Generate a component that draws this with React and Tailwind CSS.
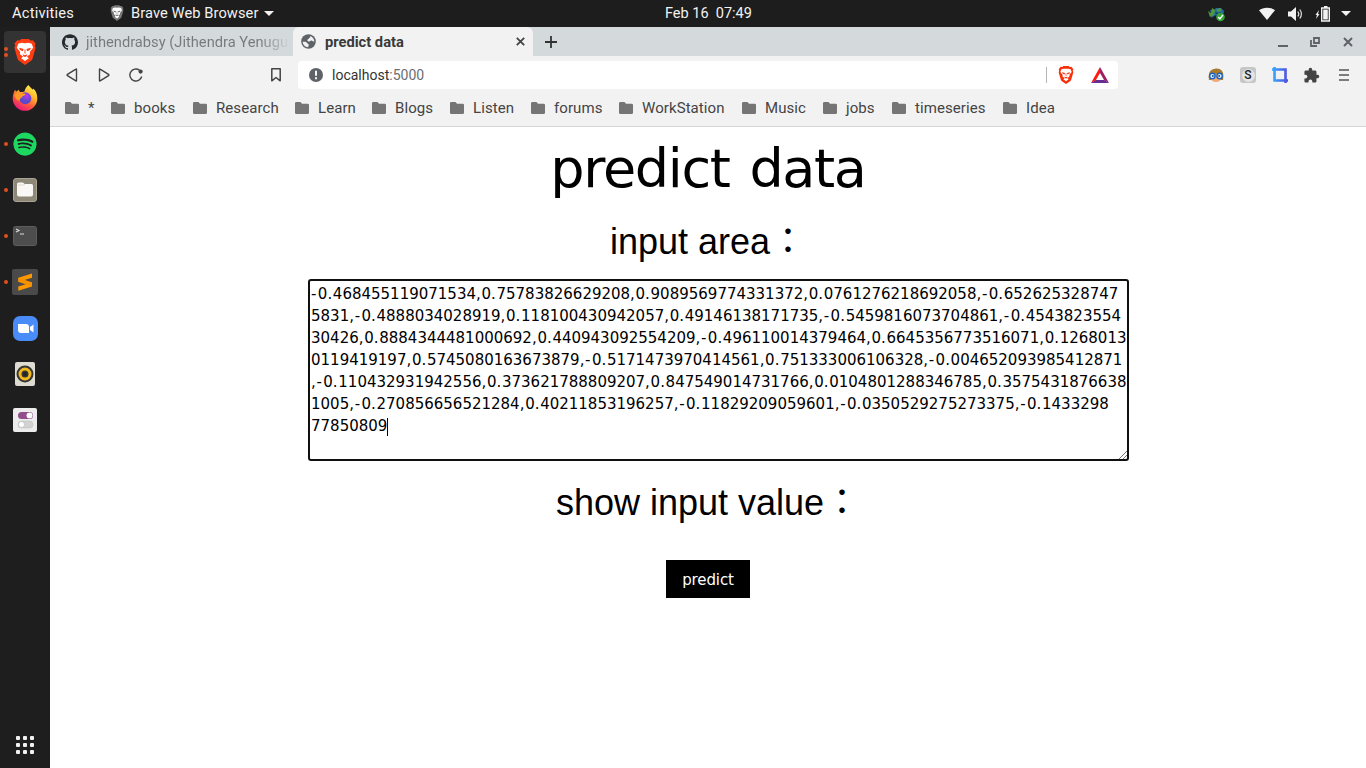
import React from "react";
import { SiGithub } from "react-icons/si";
import { FaSpotify } from "react-icons/fa";
import { MdExtension } from "react-icons/md";

const bookmarks = ["*", "books", "Research", "Learn", "Blogs", "Listen", "forums", "WorkStation", "Music", "jobs", "timeseries", "Idea"];

const lines = [
  "-0.468455119071534,0.75783826629208,0.9089569774331372,0.0761276218692058,-0.652625328747",
  "5831,-0.4888034028919,0.118100430942057,0.49146138171735,-0.5459816073704861,-0.4543823554",
  "30426,0.8884344481000692,0.440943092554209,-0.496110014379464,0.6645356773516071,0.1268013",
  "0119419197,0.5745080163673879,-0.5171473970414561,0.751333006106328,-0.004652093985412871",
  ",-0.110432931942556,0.373621788809207,0.847549014731766,0.0104801288346785,0.3575431876638",
  "1005,-0.270856656521284,0.40211853196257,-0.11829209059601,-0.0350529275273375,-0.1433298",
  "77850809",
];

// Punctuation is set a little wider than the digits' own spacing.
function NumberLine({ text }) {
  return text.split(/([,.]|-)/).map((part, i) => {
    if (part === "-") return <span key={i} className="tracking-[1.400px]">-</span>;
    if (part === "," || part === ".") return <span key={i} className="tracking-[0.690px]">{part}</span>;
    return part;
  });
}

function Lion({ className, shield, face }) {
  return (
    <svg viewBox="0 0 24 27" className={className}>
      <path d="M6.5 1.5 8 0h8l1.5 1.5L20 1.3l3 3.5-.8 2 .8 2.4-3.2 11.3q-.4 1.4-1.6 2.2L12 27l-6.2-4.3q-1.2-.8-1.6-2.2L1 9.2l.8-2.4-.8-2 3-3.5z" fill={shield} />
      <path d="M12 4.3 8.6 4 5 5 3.5 9l3.3 4.2v2.6l3.2 2.5-2 1.7 4 2.8 4-2.8-2-1.7 3.2-2.500v-2.600L20.500 9 19 5l-3.600-1z" fill={face} />
      <path d="m5.8 9.2 4.700 1.200-.7 2.200-3-1.200zM18.200 9.200l-4.700 1.200.7 2.200 3-1.200zM12 17l-2.500-1.200.8 2.200 1.700.8 1.700-.8.8-2.200zM11.500 11h1v4h-1z" fill={shield} />
    </svg>
  );
}

function Firefox() {
  return (
    <svg viewBox="0 0 26 26" className="size-[26px]">
      <defs>
        <linearGradient id="ff" x1=".85" y1=".05" x2=".3" y2="1">
          <stop offset="0" stopColor="#fff44f" /><stop offset=".35" stopColor="#ffb52b" /><stop offset=".65" stopColor="#ff5a3c" /><stop offset="1" stopColor="#e8157f" />
        </linearGradient>
        <radialGradient id="fp" cx=".6" cy=".3"><stop offset="0" stopColor="#b13cec" /><stop offset="1" stopColor="#5a48c8" /></radialGradient>
      </defs>
      <path d="M16.500 0c1 2 3 3.200 4.500 4.800l.3-1.200C24 6 25.300 9.500 25.300 13.500a12.300 12.300 0 0 1-24.600 0C.7 10 2 6.500 3.200 4.800l.8 2C5 5.700 6 5.500 6.500 4.700l1.500 2.200c2 0 3 0 4.500-.5C13 3.500 14.500 1.500 16.500 0z" fill="url(#ff)" />
      <circle cx="13.300" cy="13.300" r="6" fill="url(#fp)" />
      <path d="M2.300 10c2.200-2.500 5-2.800 7.200-2 1.500.7 3.500.2 4 1-.2 1.800-3 1.500-3.500 3.200-.8.700-2.500 1.300-2.200 3.300-3 .5-5-3-5.500-5.500z" fill="#ff9a24" />
    </svg>
  );
}

function DockItem({ dots = 0, active = false, children }) {
  return (
    <div className="flex h-[46px] items-center pl-1">
      <div className={active ? "relative flex h-[42px] w-[42px] items-center justify-center rounded bg-[#333]" : "relative flex h-[42px] w-[42px] items-center justify-center"}>
        {dots > 0 && (
          <div className="absolute left-0 flex flex-col gap-[2px]">
            {Array.from({ length: dots }, (_, i) => <span key={i} className="size-1 rounded-full bg-[#e2501e]" />)}
          </div>
        )}
        {children}
      </div>
    </div>
  );
}

function TopBar() {
  return (
    <header className="flex h-[27px] shrink-0 items-center bg-[#1d1d1d] text-[14.667px] text-[#f2f2f2]">
      <div className="flex w-[665px] items-center pb-px pl-3">
        <span className="w-[98px] tracking-[0.200px]">Activities</span>
        <Lion className="h-4 w-[14px]" shield="#777" face="#fff" />
        <span className="ml-[7px] w-[129px] whitespace-nowrap tracking-[0.080px]">Brave Web Browser</span>
        <svg viewBox="0 0 10 5" className="ml-1 h-[5px] w-[10px]"><path d="M0 0h10L5 5z" fill="#f2f2f2" /></svg>
      </div>
      <span className="w-[542px] whitespace-pre text-[14.500px]">Feb 16  07:49</span>
      <svg viewBox="0 0 18 16" className="ml-[1px] h-4 w-[18px]">
        <path d="m2 4 4 0 2-2 5 0 3 3-1 5-4 1-3-2-5 3 1-3z" fill="#246baa" />
        <path d="M0 5l3 2 1-5 3 2-1 5-4 2zM8 4l4-2 2 2-3 2z" fill="#4f9a37" />
        <path d="m7 6 3 1 3-1-2 3-3-1z" fill="#173a59" />
        <circle cx="12.500" cy="11" r="4.300" fill="#33a532" />
        <path d="m10.200 11 1.700 2 3-4" stroke="#fff" strokeWidth="1.400" fill="none" />
      </svg>
      <svg viewBox="0 0 16 13" className="ml-[33px] h-[13px] w-4"><path d="M0 3.300C4-.2 12-.2 16 3.300L8 13z" fill="#f2f2f2" /></svg>
      <svg viewBox="0 0 16 14" className="ml-[13px] h-[14px] w-4"><path d="M0 4.500h3L8 0v14L3 9.500H0z" fill="#f2f2f2" /><path d="M9.800 4.500q2 2.500 0 5M11.800 2.500q3.200 4.500 0 9" stroke="#ddd" strokeWidth="1.200" fill="none" /></svg>
      <svg viewBox="0 0 16 16" className="ml-[11px] h-4 w-4"><path d="M4 4 .5 9H2l-1 4 3.500-5H3z" fill="#f2f2f2" /><path d="M6.700 2h7.600v13H6.700zM9 .7h3.500" fill="none" stroke="#f2f2f2" strokeWidth="1.400" /><path d="M8.200 3.500h4.600v10H8.200z" fill="#f2f2f2" /></svg>
      <svg viewBox="0 0 10 5" className="ml-[10px] h-[5px] w-[10px]"><path d="M0 0h10L5 5z" fill="#f2f2f2" /></svg>
    </header>
  );
}

function Dock() {
  return (
    <aside className="flex w-[50px] shrink-0 flex-col bg-[#1e1e1e] pt-[2px]">
      <DockItem dots={2} active><Lion className="h-[26px] w-6" shield="#ff3d12" face="#fff" /></DockItem>
      <DockItem><Firefox /></DockItem>
      <DockItem dots={1}><FaSpotify className="size-6 rounded-full text-[#1ed760]" /></DockItem>
      <DockItem dots={1}>
        <svg viewBox="0 0 24 24" className="size-6"><rect x=".5" y=".5" width="23" height="23" rx="2.500" fill="#8d8877" stroke="#aaa593" /><path d="M4 6q0-1.500 1.500-1.500H10L11.500 6h7Q20 6 20 7.500v9q0 2-2 2H6q-2 0-2-2z" fill="#faf8f5" /><path d="M4.500 7h6L12 6" stroke="#ddd7c9" fill="none" /></svg>
      </DockItem>
      <DockItem dots={1}>
        <svg viewBox="0 0 24 20" className="h-5 w-6"><rect x=".5" y=".5" width="23" height="19" rx="2" fill="#4d4d4d" stroke="#5c5c5c" /><path d="m3 3 3 1.500L3 6M7 8h4" stroke="#ddd" strokeWidth="1.100" fill="none" /></svg>
      </DockItem>
      <DockItem dots={1}>
        <svg viewBox="0 0 26 26" className="size-[26px]"><rect width="26" height="26" rx="2" fill="#4a4a4a" /><path d="M20 4.500v4.200l-7.500 2.300 7.500 2.500v4L6.300 21.700v-4.200l7.500-2.300-7.500-2.500V8.700z" fill="#ff9800" /><path d="m6.300 12.500 0-3.500 13.700 4.500v3.500z" fill="#f59000" /></svg>
      </DockItem>
      <DockItem>
        <svg viewBox="0 0 25 25" className="size-[25px]"><rect width="25" height="25" rx="7" fill="#4a8cf7" /><path d="M5 8h8q3 0 3 3v6H8q-3 0-3-3zM17 11l3.500-2.500v8L17 14z" fill="#fff" /></svg>
      </DockItem>
      <DockItem>
        <svg viewBox="0 0 20 24" className="h-6 w-5"><rect width="20" height="24" rx="2" fill="#dedbd2" /><circle cx="10" cy="12" r="8.500" fill="#353535" /><circle cx="10" cy="12" r="5" fill="none" stroke="#f2b91d" strokeWidth="3" /><circle cx="10" cy="12" r="2" fill="#252525" /></svg>
      </DockItem>
      <DockItem>
        <svg viewBox="0 0 24 24" className="size-6"><rect width="24" height="24" rx="2" fill="#ececec" /><rect x="5" y="4" width="15" height="7" rx="3.500" fill="#924d8b" /><circle cx="16.500" cy="7.500" r="3" fill="#fff" /><rect x="5" y="13" width="15" height="7" rx="3.500" fill="#d2d2d2" stroke="#bbb" strokeWidth=".5" /><circle cx="8.500" cy="16.500" r="3" fill="#fff" stroke="#aaa" strokeWidth=".5" /></svg>
      </DockItem>
      <div className="mt-auto flex h-[46px] items-center justify-center">
        <div className="grid grid-cols-3 gap-[3px]">
          {Array.from({ length: 9 }, (_, i) => <span key={i} className="size-[3.700px] rounded-[1px] bg-[#f1f1f1]" />)}
        </div>
      </div>
    </aside>
  );
}

function TabStrip() {
  return (
    <div className="flex h-[29px] shrink-0 bg-[#d4d9dc]">
      <div className="flex w-[243px] items-center pl-3">
        <SiGithub className="size-4 shrink-0 text-[#24292f]" />
        <div className="ml-2 w-[204px] whitespace-nowrap bg-linear-to-r from-[#75797b] from-85% to-[#d4d9dc] bg-clip-text pt-px text-[14.700px] text-transparent">jithendrabsy (Jithendra Yenugu</div>
      </div>
      <div className="flex w-60 items-center rounded-t-md bg-[#f2f2f2] pl-2">
        <svg viewBox="0 0 16 16" className="size-[15px]"><circle cx="8" cy="8" r="7.800" fill="#5f6368" /><path d="M1.800 8.300c2-.3 4.200 0 4.700 1.200.3 1 1.700.8 1.800 2 .1 1-.7 1.200-.6 2.700C4.300 14 1.900 11.500 1.800 8.300zM9.700 2c2.500.7 4.300 2.900 4.500 5.600-.8.800-1.700.4-2.200-.3-.6-.8-1.900-.2-2.500.4-.8.600-2.400.2-2.700-.9-.3-1 1.500-1 1.600-1.900.1-1 1.500-.8 1.500-1.700z" fill="#f2f2f2" /></svg>
        <span className="ml-[9px] w-[191px] pt-px text-[14.700px] font-bold text-[#3a3a3a]">predict data</span>
        <svg viewBox="0 0 9 9" className="size-[9px]"><path d="m.8.8 7.400 7.400M8.200.8.800 8.200" stroke="#444" strokeWidth="1.800" /></svg>
      </div>
      <div className="flex flex-1 items-center pl-3">
        <svg viewBox="0 0 12 12" className="size-3"><path d="M6 0v12M0 6h12" stroke="#333" strokeWidth="1.800" /></svg>
        <svg viewBox="0 0 10 10" className="ml-[721px] size-[10px]"><path d="M0 9h10" stroke="#5f6368" strokeWidth="2" /></svg>
        <svg viewBox="0 0 10 10" className="ml-[22px] size-[10px]"><path d="M4 1h5v5H4zM1 3v6h6" stroke="#5f6368" strokeWidth="1.800" fill="none" /></svg>
        <svg viewBox="0 0 10 10" className="ml-[23px] size-[10px]"><path d="m1 1 8 8M9 1 1 9" stroke="#5f6368" strokeWidth="2" /></svg>
      </div>
    </div>
  );
}

function Toolbar() {
  return (
    <div className="flex h-[37px] shrink-0 items-center pt-px">
      <div className="flex w-[248px] items-center pl-4">
        <svg viewBox="0 0 12 14" className="h-[14px] w-3"><path d="M10.500 1.600v10.800q0 1-1 .3L1.500 7.700q-.8-.7 0-1.400l8-5q1-.7 1 .3z" fill="none" stroke="#444" strokeWidth="1.400" /></svg>
        <svg viewBox="0 0 12 14" className="ml-5 h-[14px] w-3"><path d="M1.500 1.600v10.800q0 1 1 .3l8-5q.8-.7 0-1.400l-8-5q-1-.7-1 .3z" fill="none" stroke="#444" strokeWidth="1.400" /></svg>
        <svg viewBox="0 0 14 14" className="ml-[19px] size-[14px]"><path d="M12.700 8.500A6 6 0 1 1 10.500 2.200L12 3.800" fill="none" stroke="#444" strokeWidth="1.400" /><circle cx="11.600" cy="3.600" r="2.100" fill="#444" /></svg>
        <svg viewBox="0 0 10 14" className="ml-32 h-[14px] w-[10px]"><path d="M.8.800h8.400v12L5 9.500.8 12.800z" fill="none" stroke="#444" strokeWidth="1.500" strokeLinejoin="round" /></svg>
      </div>
      <div className="flex h-7 w-[820px] items-center rounded bg-white pl-[11px] text-[14px] text-[#333]">
        <svg viewBox="0 0 14 14" className="size-[14px]"><circle cx="7" cy="7" r="7" fill="#5f6368" /><path d="M7 2.700v5M7 9.300v2" stroke="#fff" strokeWidth="1.900" /></svg>
        <span className="ml-[9px] w-[714px]">localhost<span className="text-[#6b6e73]">:5000</span></span>
        <span className="h-4 w-px bg-[#b5b5b5]" />
        <Lion className="ml-[10px] h-[18px] w-[18px]" shield="#fb2e0b" face="#fff" />
        <svg viewBox="0 0 18 16" className="ml-4 h-4 w-[18px]"><path d="M9 0 0 16l4.800-2.800L9 6z" fill="#ff1b0c" /><path d="m9 0 9 16-4.800-2.800L9 6z" fill="#9e1f63" /><path d="M0 16h18l-4.800-2.900H4.800z" fill="#662d91" /></svg>
      </div>
      <svg viewBox="0 0 16 15" className="ml-[90px] h-[15px] w-4"><path d="M1 12Q-1 1 8 .5t7 11.500z" fill="#a97a2c" /><path d="M3 5h10v6q-1 3-5 3t-5-3z" fill="#f2a97a" /><path d="M3 6q5 0 7-3l3 3z" fill="#a97a2c" /><circle cx="4.400" cy="8" r="2.700" fill="#e9f3ff" stroke="#1663c0" strokeWidth="1.400" /><circle cx="11.600" cy="8" r="2.700" fill="#e9f3ff" stroke="#1663c0" strokeWidth="1.400" /><circle cx="4.800" cy="8" r="1" fill="#124b8b" /><circle cx="11.200" cy="8" r="1" fill="#124b8b" /></svg>
      <div className="ml-4 flex size-4 items-center justify-center rounded-[3px] bg-[#c6c6c6]"><span className="flex size-[13px] items-center justify-center rounded-full bg-[#e4e4e4] text-[12px] font-medium text-[#222]">S</span></div>
      <svg viewBox="0 0 16 16" className="ml-4 size-4"><defs><linearGradient id="crop" gradientUnits="userSpaceOnUse" x1="0" y1="0" x2="16" y2="0"><stop stopColor="#35adff" /><stop offset="1" stopColor="#514bdd" /></linearGradient></defs><path d="M0 2.500h13.500V16M2.500 0v13.500H16" fill="none" stroke="url(#crop)" strokeWidth="2.600" /></svg>
      <MdExtension className="ml-[15px] size-[17px] text-[#444]" />
      <svg viewBox="0 0 10 12" className="ml-[19px] h-3 w-[10px]"><path d="M0 1h10M0 6h10M0 11h10" stroke="#555" strokeWidth="1.600" /></svg>
    </div>
  );
}

function BookmarkBar() {
  return (
    <nav className="grid h-[34px] shrink-0 grid-cols-[46px_82px_102px_77px_78px_81px_88px_123px_81px_69px_111px_80px] border-b border-[#d5d5d5] pb-[3px] pl-[15px] text-[15px] text-[#444]">
      {bookmarks.map((name) => (
        <a key={name} className="flex items-center whitespace-nowrap">
          <svg viewBox="0 0 14 12" className="h-3 w-[14px] shrink-0"><path d="M1.300 0H5.500L7 1.800h5.700q1.300 0 1.300 1.300v7.600Q14 12 12.700 12H1.300Q0 12 0 10.700v-9.400Q0 0 1.300 0z" fill="#757575" /></svg>
          <span className="ml-[9px] pt-px tracking-[0.080px]">{name}</span>
        </a>
      ))}
    </nav>
  );
}

function Page() {
  return (
    <main className="flex flex-1 flex-col items-center bg-white text-black">
      <h1 className="h-20 pt-[2px] font-['DejaVu_Sans'] text-[54px] leading-[80px] font-normal tracking-[-1.350px] [word-spacing:4px]">predict data</h1>
      <label className="mt-3 h-[46px] font-['Liberation_Sans','Noto_Sans_CJK_JP',sans-serif] text-[36px] leading-[46px]">input area：</label>
      <div className="relative mt-[14px] ml-[21px] h-[182px] w-[821px] rounded-[3px] border-2 border-[#101010] pt-[2px] pl-px font-['DejaVu_Sans'] text-[15px] leading-[22px]">
        {lines.map((line, i) => (
          <div key={line} className="h-[22px] whitespace-nowrap">
            <NumberLine text={line} />
            {i === lines.length - 1 && <span className="inline-block h-[18px] w-px bg-black align-middle" />}
          </div>
        ))}
        <svg viewBox="0 0 9 9" className="absolute right-0 bottom-0 size-[9px]"><path d="m1 9 8-8M5 9l4-4" stroke="#777" fill="none" /></svg>
      </div>
      <label className="mt-[19px] h-[46px] font-['Liberation_Sans','Noto_Sans_CJK_JP',sans-serif] text-[36px] leading-[46px]">show input value：</label>
      <button className="mt-[34px] h-[38px] w-[84px] bg-black pt-[2px] font-['DejaVu_Sans'] text-[15px] tracking-[-0.100px] text-white">predict</button>
    </main>
  );
}

export default function App() {
  return (
    <div className="flex h-screen w-screen flex-col overflow-hidden font-['Roboto',sans-serif]">
      <TopBar />
      <div className="flex min-h-0 flex-1">
        <Dock />
        <section className="flex min-w-0 flex-1 flex-col bg-[#f2f2f2]">
          <TabStrip />
          <Toolbar />
          <BookmarkBar />
          <Page />
        </section>
      </div>
    </div>
  );
}
